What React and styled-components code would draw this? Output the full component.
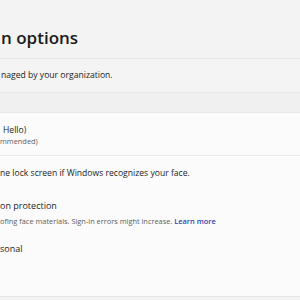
import React from 'react';
import styled, { createGlobalStyle } from 'styled-components';

const GlobalStyle = createGlobalStyle`
  html, body {
    margin: 0;
    padding: 0;
    background: #f3f3f3;
    width: 300px;
    height: 300px;
    overflow: hidden;
  }
  body {
    font-family: "Open Sans", "Noto Sans", sans-serif;
    color: #1b1b1b;
  }
`;

const Page = styled.div`
  width: 300px;
  height: 300px;
  display: flex;
  flex-direction: column;
  overflow: hidden;
`;

const Header = styled.div`
  height: 58px;
  display: flex;
  align-items: flex-end;
  padding-left: 1px;
`;

const Title = styled.h1`
  margin: 0 0 9px;
  font-size: 17px;
  line-height: 22px;
  font-weight: 600;
  color: #1a1a1a;
  white-space: nowrap;
`;

const InfoBar = styled.div`
  height: 33px;
  border-top: 1px solid #e6e6e6;
  border-bottom: 1px solid #e6e6e6;
  background: #f4f4f4;
  display: flex;
  align-items: center;
  padding-left: 1px;
`;

const Strip = styled.div`
  height: 19px;
  background: #f0f0f0;
`;

const Card = styled.div`
  background: #fbfbfb;
  border-top: 1px solid #e8e8e8;
  border-bottom: 1px solid #e5e5e5;
  height: 183px;
  display: flex;
  flex-direction: column;
`;

const Row = styled.div`
  height: 43px;
  border-bottom: 1px solid #ebebeb;
  display: flex;
  flex-direction: column;
  justify-content: center;
  padding-top: 2px;
  box-sizing: border-box;
`;

const Body = styled.div`
  display: flex;
  flex-direction: column;
  padding-top: 11px;
`;

const Text = styled.div`
  font-size: ${({ $size }) => $size || 8.6}px;
  line-height: ${({ $lh }) => $lh || 13}px;
  color: ${({ $muted }) => ($muted ? '#5d5d5d' : '#1b1b1b')};
  white-space: nowrap;
  margin-top: ${({ $mt }) => $mt || 0}px;
  padding-left: ${({ $indent }) => $indent || 0}px;
`;

const Link = styled.span`
  color: #2a46ad;
  font-weight: 600;
`;

export default function App() {
  return (
    <Page>
      <GlobalStyle />
      <Header>
        <Title>n options</Title>
      </Header>
      <InfoBar>
        <Text>naged by your organization.</Text>
      </InfoBar>
      <Strip />
      <Card>
        <Row>
          <Text $lh={12} $indent={3}>Hello)</Text>
          <Text $size={7.4} $lh={11} $muted>mmended)</Text>
        </Row>
        <Body>
          <Text>ne lock screen if Windows recognizes your face.</Text>
          <Text $mt={19} $size={9}>on protection</Text>
          <Text $size={7.4} $lh={11} $muted $mt={4}>
            ofing face materials. Sign-in errors might increase. <Link>Learn more</Link>
          </Text>
          <Text $mt={15} $size={9}>sonal</Text>
        </Body>
      </Card>
    </Page>
  );
}
